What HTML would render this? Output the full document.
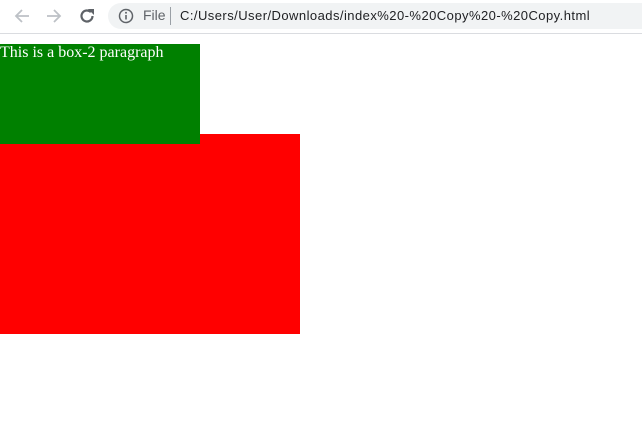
<!DOCTYPE html>
<html><head><style>
body{margin:0;width:642px;height:425px;background:#fff;position:relative;overflow:hidden;font-family:"Liberation Sans",sans-serif}
.bar{position:absolute;left:0;top:0;width:642px;height:33px;background:#fff;border-bottom:1px solid #dadce0}
.omni{position:absolute;left:108px;top:3px;width:560px;height:26px;border-radius:13px;background:#f1f3f4}
.t{position:absolute;top:8px;font-size:13px;color:#202124;white-space:nowrap;line-height:16px}
.g{position:absolute;left:0;top:44px;width:200px;height:100px;background:#008000;z-index:2;color:#fff;font-family:"Liberation Serif",serif;font-size:16px;line-height:18px}
.r{position:absolute;left:0;top:134px;width:300px;height:200px;background:#f00}
</style></head><body>
<div class="bar">
<svg style="position:absolute;left:12px;top:6px" width="20" height="20" viewBox="0 0 20 20"><path d="M17 10H4M10 4l-6 6 6 6" stroke="#bdc1c6" stroke-width="1.8" fill="none"/></svg>
<svg style="position:absolute;left:44px;top:6px" width="20" height="20" viewBox="0 0 20 20"><path d="M3 10h13M10 4l6 6-6 6" stroke="#bdc1c6" stroke-width="1.8" fill="none"/></svg>
<svg style="position:absolute;left:77px;top:6px" width="20" height="20" viewBox="0 0 20 20"><path d="M15.5 10a5.5 5.5 0 1 1-1.6-3.9" stroke="#5f6368" stroke-width="2.2" fill="none"/><path d="M11 3h6v6z" fill="#5f6368"/></svg>
<div class="omni"></div>
<svg style="position:absolute;left:117px;top:7px" width="18" height="18" viewBox="0 0 18 18"><circle cx="9" cy="9" r="6.5" stroke="#5f6368" stroke-width="1.5" fill="none"/><path d="M9 8v4.5" stroke="#5f6368" stroke-width="1.6"/><circle cx="9" cy="5.8" r="1" fill="#5f6368"/></svg>
<div class="t" style="left:143px;color:#5f6368;font-size:14px;top:7px">File</div>
<div style="position:absolute;left:170px;top:7px;width:1px;height:18px;background:#9aa0a6"></div>
<div class="t" style="left:180px;letter-spacing:0.45px">C:/Users/User/Downloads/index%20-%20Copy%20-%20Copy.html</div>
</div>
<div class="g">This is a box-2 paragraph</div>
<div class="r"></div>
</body></html>
